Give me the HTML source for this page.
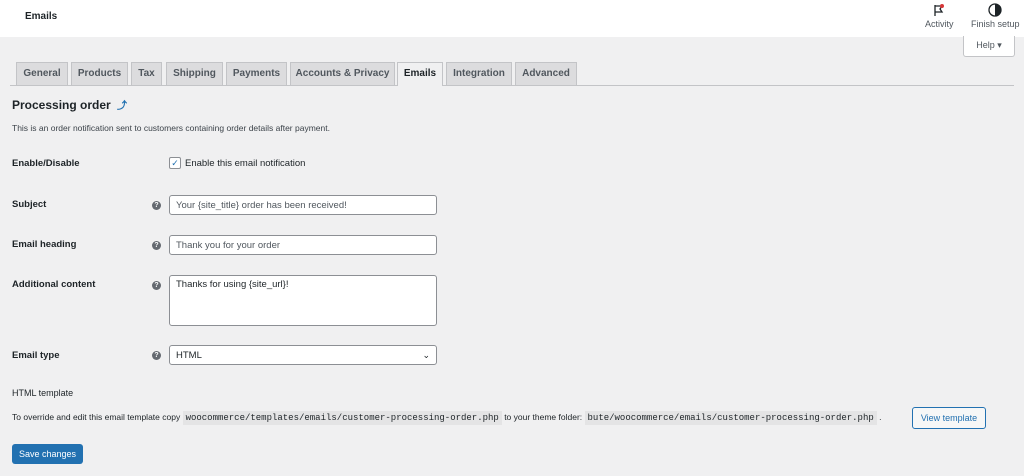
<!DOCTYPE html><html><head><style>
body{margin:0;width:1024px;height:476px;background:#f0f0f1;font-family:"Liberation Sans",sans-serif;color:#1d2327;position:relative;overflow:hidden;font-size:9.5px}
.a{position:absolute}
.hdr{left:0;top:0;width:1024px;height:37px;background:#fff}
.tab{position:absolute;top:62px;height:22px;line-height:22px;background:#dcdcde;border:1px solid #c3c4c7;border-bottom:none;text-align:center;font-size:10px;font-weight:bold;color:#50575e}
.lbl{position:absolute;left:12px;font-weight:bold;font-size:9.5px}
.inp{position:absolute;left:169px;width:266px;height:19px;background:#fff;border:1px solid #8c8f94;border-radius:3px;font-size:9.5px;color:#50575e;line-height:19px;padding-left:6px;box-sizing:border-box;width:268px}
.q{position:absolute;left:152px;width:9px;height:9px;border-radius:50%;background:#646970;color:#fff;font-size:7px;line-height:9px;text-align:center;font-weight:bold}
code{background:#e4e4e5;font-family:"Liberation Mono",monospace;font-size:9px;padding:2px 3px}
</style></head><body>
<div class="a hdr"></div>
<div class="a" style="left:25px;top:11px;font-size:10px;font-weight:bold">Emails</div>
<svg class="a" style="left:932px;top:3px" width="14" height="14" viewBox="0 0 14 14"><path d="M3 2v11M3 3h7l-2 3 2 3H3" fill="none" stroke="#1d2327" stroke-width="1.3"/><circle cx="10" cy="3" r="2" fill="#d63638"/></svg>
<div class="a" style="left:925px;top:19px;font-size:9px;color:#50575e">Activity</div>
<svg class="a" style="left:988px;top:3px" width="14" height="14" viewBox="0 0 14 14"><circle cx="7" cy="7" r="6" fill="none" stroke="#1d2327" stroke-width="1.3"/><path d="M7 1a6 6 0 0 1 0 12z" fill="#1d2327"/></svg>
<div class="a" style="left:971px;top:19px;font-size:9px;color:#50575e">Finish setup</div>
<div class="a" style="left:963px;top:36px;width:50px;height:20px;background:#fff;border:1px solid #c3c4c7;border-top:none;border-radius:0 0 3px 3px;font-size:9px;color:#50575e;text-align:center;line-height:19px">Help ▾</div>
<div class="a" style="left:10px;top:85px;width:1004px;height:1px;background:#c3c4c7"></div>
<div class="tab" style="left:16px;width:50px">General</div>
<div class="tab" style="left:71px;width:55px">Products</div>
<div class="tab" style="left:131px;width:29px">Tax</div>
<div class="tab" style="left:166px;width:55px">Shipping</div>
<div class="tab" style="left:226px;width:59px">Payments</div>
<div class="tab" style="left:290px;width:103px">Accounts &amp; Privacy</div>
<div class="tab" style="left:397px;width:44px;background:#f0f0f1;color:#1d2327;height:23px">Emails</div>
<div class="tab" style="left:446px;width:64px">Integration</div>
<div class="tab" style="left:515px;width:60px">Advanced</div>
<div class="a" style="left:12px;top:97px;font-size:12px;font-weight:bold">Processing order <span style="color:#2271b1;font-size:10px;margin-left:3px">⤴</span></div>
<div class="a" style="left:12px;top:123px;font-size:8.5px;color:#3c434a">This is an order notification sent to customers containing order details after payment.</div>
<div class="lbl" style="top:158px">Enable/Disable</div>
<div class="a" style="left:169px;top:157px;width:10px;height:10px;border:1px solid #8c8f94;border-radius:2px;background:#fff;color:#2271b1;font-size:9px;line-height:10px;text-align:center">✓</div>
<div class="a" style="left:185px;top:158px;font-size:9.5px">Enable this email notification</div>
<div class="lbl" style="top:199px">Subject</div><div class="q" style="top:201px">?</div>
<div class="inp" style="top:195px;height:20px">Your {site_title} order has been received!</div>
<div class="lbl" style="top:239px">Email heading</div><div class="q" style="top:241px">?</div>
<div class="inp" style="top:235px;height:20px">Thank you for your order</div>
<div class="lbl" style="top:279px">Additional content</div><div class="q" style="top:281px">?</div>
<div class="inp" style="top:275px;height:51px;line-height:14px;padding-top:2px;color:#1d2327">Thanks for using {site_url}!</div>
<div class="lbl" style="top:350px">Email type</div><div class="q" style="top:351px">?</div>
<div class="inp" style="top:345px;height:20px;color:#1d2327">HTML<span style="position:absolute;right:6px;top:0;font-size:9px">⌄</span></div>
<div class="a" style="left:12px;top:388px;font-size:9px">HTML template</div>
<div class="a" style="left:12px;top:412px;font-size:8.5px;white-space:nowrap">To override and edit this email template copy <code>woocommerce/templates/emails/customer-processing-order.php</code> to your theme folder: <code>bute/woocommerce/emails/customer-processing-order.php</code> .</div>
<div class="a" style="left:912px;top:407px;width:72px;height:20px;border:1px solid #2271b1;border-radius:3px;background:#f6f7f7;color:#2271b1;font-size:9px;text-align:center;line-height:20px">View template</div>
<div class="a" style="left:12px;top:444px;width:71px;height:20px;background:#2271b1;border-radius:3px;color:#fff;font-size:9px;text-align:center;line-height:20px">Save changes</div>
</body></html>
